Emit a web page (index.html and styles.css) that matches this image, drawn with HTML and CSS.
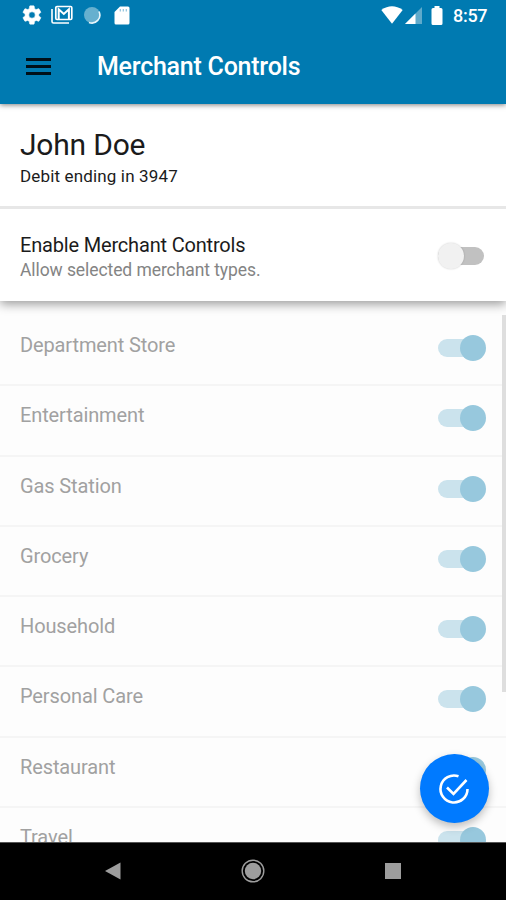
FILE: index.html
```html
<!DOCTYPE html>
<html lang="en">
<head>
<meta charset="utf-8">
<title>Merchant Controls</title>
<link rel="stylesheet" href="styles.css">
</head>
<body>
<div class="screen">
  <header class="header">
    <div class="status">
      <svg class="gear" width="22" height="22" viewBox="0 0 24 24"><path fill="#fff" stroke="#fff" stroke-width=".6" d="M19.4 13a7.800 7.800 0 0 0 0-2l2.100-1.600c.2-.2.200-.4.100-.6l-2-3.500c-.1-.2-.4-.3-.6-.2l-2.500 1a7 7 0 0 0-1.700-1l-.4-2.600c0-.3-.2-.5-.5-.5h-4c-.3 0-.5.200-.5.500L9 5.100a7 7 0 0 0-1.700 1l-2.500-1c-.2-.1-.5 0-.6.200l-2 3.500c-.1.200-.1.400.1.600L4.500 11a7.800 7.800 0 0 0 0 2l-2.200 1.600c-.2.200-.2.400-.1.600l2 3.500c.1.200.4.300.6.200l2.500-1a7 7 0 0 0 1.700 1l.4 2.600c0 .3.200.5.500.5h4c.3 0 .5-.2.500-.5l.4-2.600a7 7 0 0 0 1.700-1l2.500 1c.2.100.5 0 .6-.2l2-3.500c.1-.2.100-.4-.1-.6zM12 15.500a3.500 3.500 0 1 1 0-7 3.500 3.500 0 0 1 0 7z"/></svg>
      <svg class="mail" width="22" height="20" viewBox="0 0 22 20"><path d="M1 4v12.500Q1 18 2.500 18H18" fill="none" stroke="#fff" stroke-width="1.600"/><rect x="4.800" y="1.500" width="16" height="13" rx="1.200" fill="none" stroke="#fff" stroke-width="1.700"/><path d="M7.700 14V4.300l5.100 4.700 5.100-4.700V14" fill="none" stroke="#fff" stroke-width="2"/></svg>
      <svg class="sync" width="18" height="18" viewBox="0 0 18 18"><circle cx="9" cy="9" r="8" fill="#66b0cf"/><path d="M16 5.500A8 8 0 0 1 6 16.500" fill="none" stroke="#e8f6fb" stroke-width="1.600"/></svg>
      <svg class="sd" width="16" height="19" viewBox="0 0 16 19"><path fill="#fff" d="M6 .5h8Q15.500.5 15.500 2v15q0 1.500-1.500 1.500H2Q.5 18.500.500 17V6z"/><path d="M6.300 3v2.500M9.300 3v2.500M12.300 3v2.500" stroke="#8fc3dc" stroke-width="1.200"/></svg>
      <svg class="wifi" width="22" height="18" viewBox="0 0 22 18"><path fill="#fff" d="M.3 4Q11-3.500 21.700 4L11 17.700z"/></svg>
      <svg class="signal" width="17" height="17" viewBox="0 0 17 17"><path fill="#5faacb" d="M17 0v17H0z"/><path fill="#fff" d="M10.500 6.500V17H0z"/></svg>
      <svg class="battery" width="12" height="19" viewBox="0 0 12 19"><path fill="#fff" d="M3.500 0h5v2H10q1.500 0 1.500 1.500v14Q11.500 19 10 19H2Q.5 19 .5 17.500v-14Q.5 2 2 2h1.500z"/></svg>
      <span class="clock">8:57</span>
    </div>
    <div class="toolbar">
      <div class="menu"><i></i><i></i><i></i></div>
      <h1>Merchant Controls</h1>
    </div>
  </header>
  <section class="account">
    <h2>John Doe</h2>
    <p>Debit ending in 3947</p>
  </section>
  <section class="enable">
    <div>
      <h3>Enable Merchant Controls</h3>
      <p>Allow selected merchant types.</p>
    </div>
    <span class="toggle off"></span>
  </section>
  <main class="list">
    <div class="row"><span class="label">Department Store</span><span class="toggle"></span></div>
    <div class="row"><span class="label">Entertainment</span><span class="toggle"></span></div>
    <div class="row"><span class="label">Gas Station</span><span class="toggle"></span></div>
    <div class="row"><span class="label">Grocery</span><span class="toggle"></span></div>
    <div class="row"><span class="label">Household</span><span class="toggle"></span></div>
    <div class="row"><span class="label">Personal Care</span><span class="toggle"></span></div>
    <div class="row"><span class="label">Restaurant</span><span class="toggle"></span></div>
    <div class="row"><span class="label">Travel</span><span class="toggle"></span></div>
    <div class="scrollbar"></div>
    <div class="fab"><svg width="34" height="34" viewBox="0 0 34 34" fill="none" stroke="#fff" stroke-width="2.600"><path d="M21.500 4.300A13.500 13.500 0 1 0 30.500 17"/><path d="M10 15.500l6.500 6.500L29.500 8"/></svg></div>
  </main>
  <nav class="nav">
    <svg width="16" height="18" viewBox="0 0 16 18"><path fill="#9d9d9d" d="M0 9L15.500.500v17z"/></svg>
    <svg width="24" height="24" viewBox="0 0 24 24"><circle cx="12" cy="12" r="8.200" fill="#9d9d9d"/><circle cx="12" cy="12" r="10.800" fill="none" stroke="#9d9d9d" stroke-width="1.400"/></svg>
    <svg width="16" height="16" viewBox="0 0 16 16"><path fill="#9d9d9d" d="M0 0h16v16H0z"/></svg>
  </nav>
</div>
</body>
</html>
```

FILE: styles.css
```css
* { box-sizing: border-box; }
body { margin: 0; font-family: Roboto, "Liberation Sans", sans-serif; }
h1, h2, h3, p { margin: 0; font-weight: 400; white-space: nowrap; }
svg { display: block; flex: none; }
.screen { width: 506px; height: 900px; display: flex; flex-direction: column; overflow: hidden; background: #fdfdfd; }

.header { height: 104px; flex: none; background: #007ab1; color: #fff; position: relative; z-index: 3; box-shadow: 0 1px 5px rgba(0,0,0,.5); }
.status { height: 30px; display: flex; align-items: center; padding-left: 21px; }
.mail { margin-left: 8px; }
.sync { margin-left: 10px; }
.sd { margin-left: 13px; }
.wifi { margin-left: 251px; }
.signal { margin-left: 2px; }
.battery { margin-left: 9px; }
.clock { margin-left: 10px; font-size: 18px; font-weight: 500; line-height: 20px; padding-top: 2px; letter-spacing: -.3px; }
.toolbar { height: 72px; display: flex; align-items: center; padding-left: 26px; }
.menu { width: 25px; display: flex; flex-direction: column; gap: 4px; padding-top: 1px; }
.menu i { height: 3px; background: #001019; }
h1 { margin-left: 46px; padding-top: 1px; font-size: 25px; font-weight: 500; line-height: 30px; letter-spacing: -.24px; }

.account { height: 105px; flex: none; background: #fff; border-bottom: 3px solid #e7e7e7; padding: 23px 20px 0; color: #1b1b1b; }
h2 { font-size: 30px; line-height: 36px; letter-spacing: -.2px; }
.account p { font-size: 17px; line-height: 20px; margin-top: 3px; letter-spacing: .15px; }

.enable { height: 92px; flex: none; background: #fff; display: flex; justify-content: space-between; padding: 24px 20px 0; position: relative; z-index: 2; box-shadow: 0 3px 10px rgba(0,0,0,.4); clip-path: inset(0 0 -20px 0); }
h3 { font-size: 20px; line-height: 24px; color: #1b1b1b; letter-spacing: -.18px; }
.enable p { font-size: 17.5px; line-height: 22px; color: #848484; margin-top: 2px; letter-spacing: -.08px; }

.toggle { width: 48px; height: 26px; flex: none; display: flex; align-items: center; position: relative; }
.toggle::before { content: ""; width: 46px; height: 18px; border-radius: 9px; background: #cbe3ed; }
.toggle::after { content: ""; position: absolute; right: 0; top: 0; width: 26px; height: 26px; border-radius: 50%; background: #97c8dd; }
.off { margin-top: 10px; }
.off::before { background: #c1c1c1; }
.off::after { right: auto; left: 0; background: #f1f1f1; box-shadow: 0 0 2px rgba(0,0,0,.2); }

.list { flex: 1; min-height: 0; overflow: hidden; padding-top: 15px; background: #fdfdfd; position: relative; }
.row { height: 70.3px; display: flex; justify-content: space-between; padding: 17px 20px 0; border-bottom: 2px solid #f5f5f5; }
.label { font-size: 20px; line-height: 24px; color: #a1a1a1; letter-spacing: -.12px; }
.row .toggle { margin-top: 2px; }
.scrollbar { position: absolute; right: 0; top: 14px; width: 4px; height: 377px; background: #dedede; }
.fab { position: absolute; left: 420px; top: 453px; width: 68.5px; height: 69px; border-radius: 50%; background: #007aff; display: flex; align-items: center; justify-content: center; padding-right: 1px; box-shadow: 0 4px 8px rgba(0,0,0,.25); }

.nav { height: 58px; flex: none; background: #000; border-top: 1px solid #555; display: flex; justify-content: space-between; align-items: center; padding: 0 105px 2px; }
```
